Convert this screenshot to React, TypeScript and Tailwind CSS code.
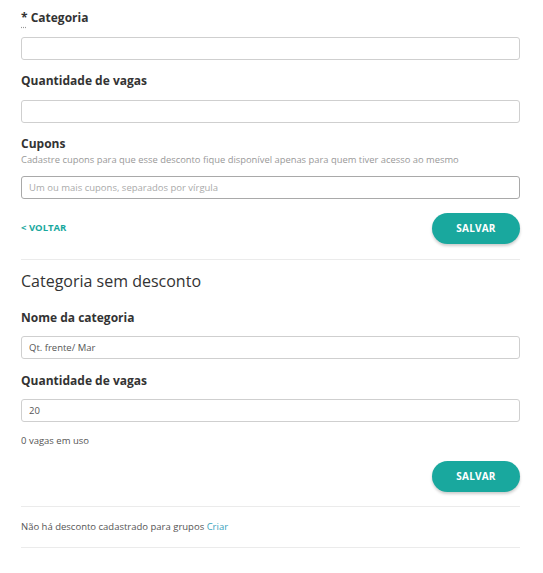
import React from 'react';

function Label({ children }: { children: React.ReactNode }) {
  return <div className="text-[12px] leading-[18px] font-bold text-[#333333]">{children}</div>;
}

function TextInput({ value, placeholder, strong }: { value?: string; placeholder?: string; strong?: boolean }) {
  return (
    <input
      readOnly
      defaultValue={value}
      placeholder={placeholder}
      className={`block w-full h-[23px] rounded-[3px] border bg-white px-[7px] text-[9.5px] text-[#555] placeholder:text-[#aaa] outline-none ${
        strong ? 'border-[#a9a9a9]' : 'border-[#cfcfcf]'
      }`}
    />
  );
}

function SaveButton() {
  return (
    <button className="h-[31px] w-[88px] rounded-full bg-[#19a89e] text-[10px] font-bold tracking-[0.2px] text-white shadow-[0_2px_3px_rgba(0,0,0,0.2)]">
      SALVAR
    </button>
  );
}

export default function App() {
  return (
    <div className="min-h-[573px] bg-white pl-[21px] pr-[23px] pt-[9px] font-['Open_Sans',sans-serif] text-[#333]">
      {/* Categoria com desconto */}
      <Label>
        <abbr title="obrigatório" className="no-underline">
          <span className="underline decoration-dotted decoration-[#999] underline-offset-[5px]">*</span>
        </abbr>{' '}
        Categoria
      </Label>
      <div className="mt-[10px]">
        <TextInput />
      </div>

      <div className="mt-[12px]">
        <Label>Quantidade de vagas</Label>
      </div>
      <div className="mt-[10px]">
        <TextInput />
      </div>

      <div className="mt-[12px]">
        <Label>Cupons</Label>
        <p className="text-[9.4px] leading-[14px] text-[#999]">
          Cadastre cupons para que esse desconto fique disponível apenas para quem tiver acesso ao mesmo
        </p>
      </div>
      <div className="mt-[9px]">
        <TextInput placeholder="Um ou mais cupons, separados por vírgula" strong />
      </div>

      <div className="mt-[14px] flex items-center justify-between">
        <a className="text-[9.5px] font-bold text-[#19a89e]">&lt; VOLTAR</a>
        <SaveButton />
      </div>

      <div className="mt-[15px] border-t border-[#ebebeb]" />

      {/* Categoria sem desconto */}
      <h2 className="mt-[9px] text-[16px] leading-[24px] font-normal text-[#333]">Categoria sem desconto</h2>

      <div className="mt-[16px]">
        <Label>Nome da categoria</Label>
      </div>
      <div className="mt-[9px]">
        <TextInput value="Qt. frente/ Mar" />
      </div>

      <div className="mt-[13px]">
        <Label>Quantidade de vagas</Label>
      </div>
      <div className="mt-[9px]">
        <TextInput value="20" />
      </div>

      <p className="mt-[12px] text-[9.5px] leading-[14px] text-[#555]">0 vagas em uso</p>

      <div className="mt-[13px] flex justify-end">
        <SaveButton />
      </div>

      <div className="mt-[14px] border-t border-[#ebebeb]" />

      <p className="py-[13px] text-[9.5px] leading-[14px] text-[#555]">
        Não há desconto cadastrado para grupos <a className="text-[#3aa3bd]">Criar</a>
      </p>

      <div className="border-t border-[#ebebeb]" />
    </div>
  );
}
